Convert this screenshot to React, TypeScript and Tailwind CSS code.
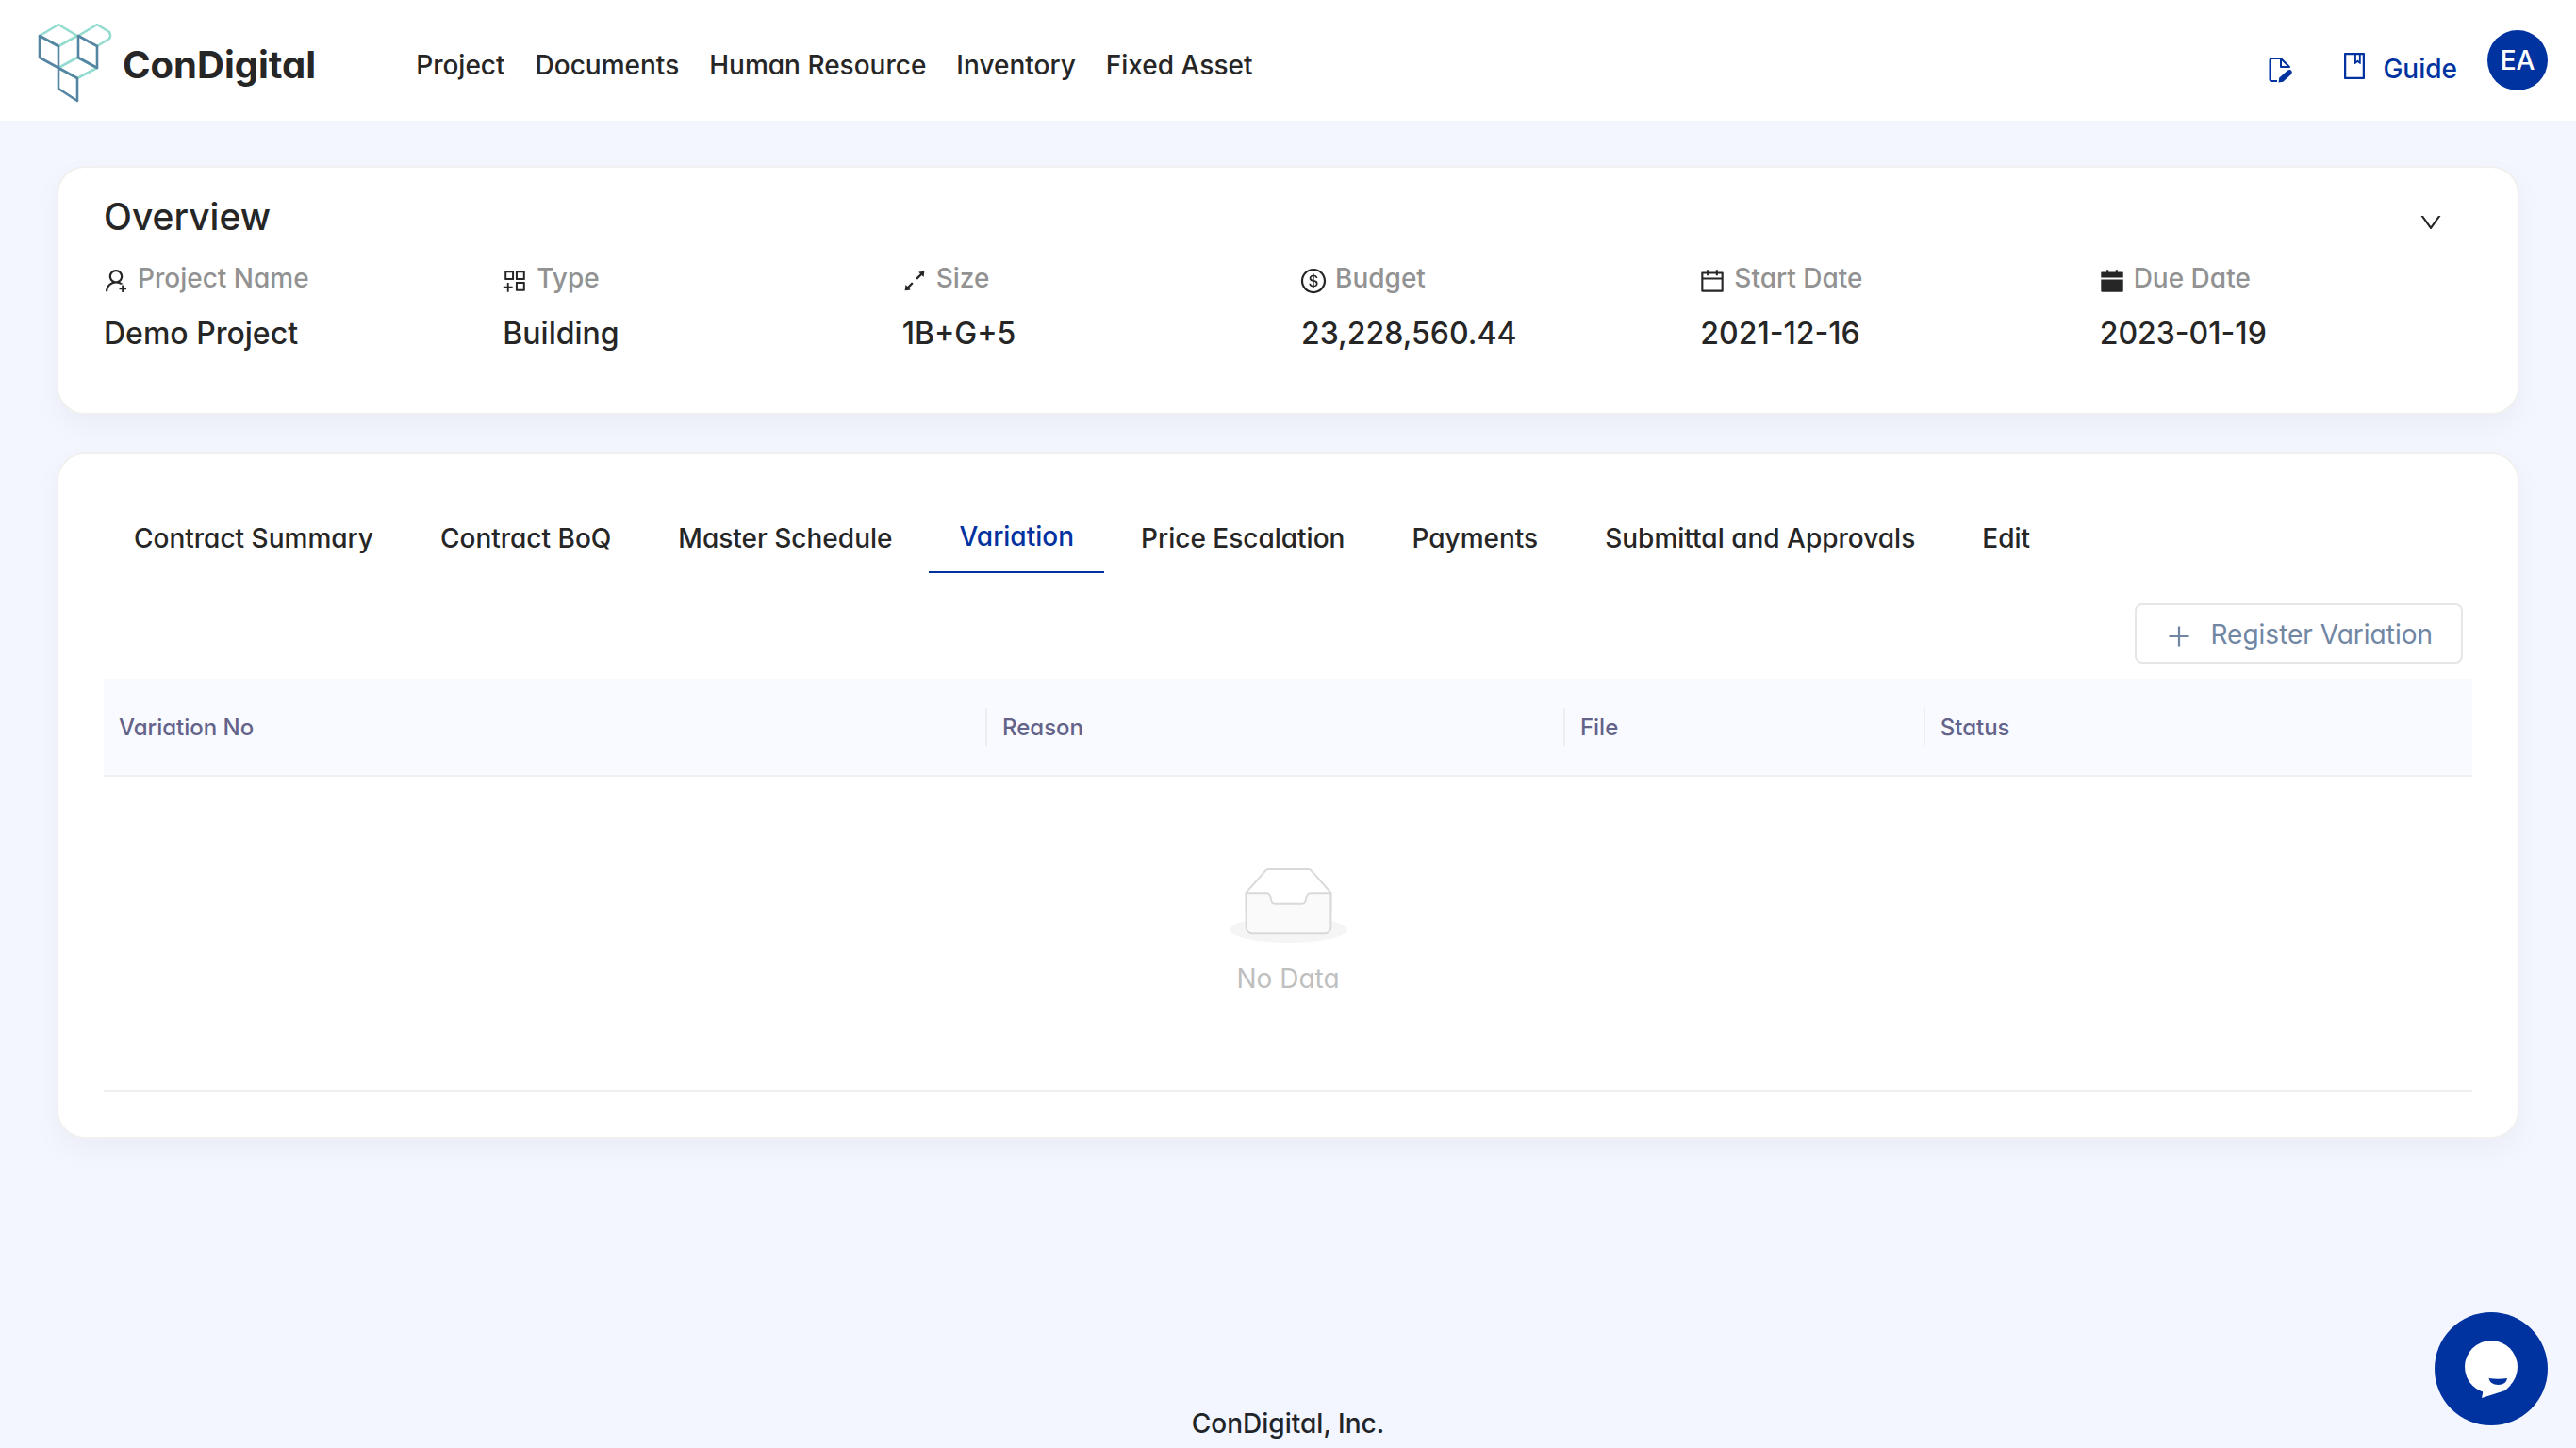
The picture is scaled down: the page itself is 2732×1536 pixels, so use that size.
import React, { useState } from 'react';
import {
  AiFillCalendar,
  AiOutlineAppstoreAdd,
  AiOutlineBook,
  AiOutlineCalendar,
  AiOutlineDollar,
  AiOutlineDown,
  AiOutlineExpandAlt,
  AiOutlinePlus,
  AiOutlineUserAdd,
} from 'react-icons/ai';

const navLinks = ['Project', 'Documents', 'Human Resource', 'Inventory', 'Fixed Asset'];

const overview = [
  { label: 'Project Name', value: 'Demo Project', icon: AiOutlineUserAdd },
  { label: 'Type', value: 'Building', icon: AiOutlineAppstoreAdd },
  { label: 'Size', value: '1B+G+5', icon: AiOutlineExpandAlt },
  { label: 'Budget', value: '23,228,560.44', icon: AiOutlineDollar },
  { label: 'Start Date', value: '2021-12-16', icon: AiOutlineCalendar },
  { label: 'Due Date', value: '2023-01-19', icon: AiFillCalendar },
];

const tabs = [
  'Contract Summary',
  'Contract BoQ',
  'Master Schedule',
  'Variation',
  'Price Escalation',
  'Payments',
  'Submittal and Approvals',
  'Edit',
];

const columns = [
  { title: 'Variation No', width: 'w-[37.3%]' },
  { title: 'Reason', width: 'w-[24.4%]' },
  { title: 'File', width: 'w-[15.2%]' },
  { title: 'Status', width: 'w-[23.1%]' },
];

function Logo() {
  return (
    <svg width="80" height="88" viewBox="40 22 80 88" fill="none" strokeWidth="2.6" strokeLinejoin="round" aria-hidden="true">
      <g stroke="#93dccf">
        <path d="M62 26 42 38l20 11 20-11z" />
        <path d="M83 38l20-12 13 8q2 4 0 7l-13 8" />
        <path d="M82 61 62 72l20 11 21-11z" />
      </g>
      <g stroke="#5585a3">
        <path d="M42 38v23l20 11V49z" />
        <path d="M83 38v23l20 11V49z" />
        <path d="M62 72v22l20 13V83z" />
      </g>
    </svg>
  );
}

function FileEditIcon() {
  return (
    <svg width="28" height="28" viewBox="0 0 28 28" fill="none" aria-hidden="true">
      <path d="M10 26H4.500Q2.500 26 2.500 24V4Q2.500 2 4.500 2H14l9 9H14V2" stroke="currentColor" strokeWidth="2" strokeLinejoin="round" />
      <path d="M11.500 27.500l.8-5 8.700-7.700q2.500-1.800 4.300.200 1.300 2-.5 4l-8.500 7.700z" fill="currentColor" />
    </svg>
  );
}

function EmptyImage() {
  return (
    <svg className="mx-auto" width="125" height="80" viewBox="0 0 64 41" aria-hidden="true">
      <g transform="translate(0 1)" fill="none" fillRule="evenodd">
        <ellipse fill="#f5f5f5" cx="32" cy="33" rx="32" ry="7" />
        <g fillRule="nonzero" stroke="#d9d9d9">
          <path d="M55 12.760L44.854 1.258C44.367.474 43.656 0 42.907 0H21.093c-.749 0-1.460.474-1.947 1.257L9 12.761V22h46v-9.240z" />
          <path
            d="M41.613 15.931c0-1.605.994-2.930 2.227-2.931H55v18.137C55 33.260 53.680 35 52.050 35h-40.100C10.320 35 9 33.259 9 31.137V13h11.160c1.233 0 2.227 1.323 2.227 2.928v.022c0 1.605 1.005 2.901 2.237 2.901h14.752c1.232 0 2.237-1.308 2.237-2.913v-.007z"
            fill="#fafafa"
          />
        </g>
      </g>
    </svg>
  );
}

function Card({ children, className }: { children: React.ReactNode; className: string }) {
  return (
    <section className={`rounded-[30px] border-2 border-[#f0f0f0] bg-white px-12 shadow-[0_12px_32px_rgba(0,0,0,0.04)] ${className}`}>
      {children}
    </section>
  );
}

export default function App() {
  const [active, setActive] = useState('Variation');

  return (
    <div className="flex min-h-screen flex-col bg-[#f3f6ff] font-['Inter','Liberation_Sans',sans-serif] text-[28px] leading-[44px] font-medium text-[#262626] [font-feature-settings:'cv11']">
      {/* Top bar */}
      <header className="flex h-32 items-center bg-white pr-[30px] pl-10">
        <a href="#" className="flex items-center gap-[10px] pt-1">
          <Logo />
          <span className="pt-[6px] text-[40px] font-bold">ConDigital</span>
        </a>
        <nav className="ml-[106px] flex gap-8 pt-[10px]">
          {navLinks.map(link => (
            <a key={link} href="#">{link}</a>
          ))}
        </nav>
        <div className="ml-auto flex items-center text-[#0032a0]">
          <button type="button" aria-label="Edit document" className="mt-5 mr-12">
            <FileEditIcon />
          </button>
          <a href="#" className="mr-8 flex items-center gap-[14px]">
            <AiOutlineBook size={32} className="mt-3" />
            <span className="pt-[18px]">Guide</span>
          </a>
          <button type="button" className="h-16 w-16 rounded-full bg-[#0032a0] text-white">EA</button>
        </div>
      </header>

      <main className="flex flex-col gap-10 px-[60px] pt-12">
        {/* Project overview */}
        <Card className="pt-[22px] pb-[58px]">
          <div className="flex items-center justify-between">
            <h2 className="text-[39px] leading-[60px]">Overview</h2>
            <button type="button" aria-label="Toggle overview" className="mt-3 mr-[30px]">
              <AiOutlineDown size={28} />
            </button>
          </div>
          <dl className="-mr-7 grid grid-cols-6 pt-[13px]">
            {overview.map(({ label, value, icon: Icon }) => (
              <div key={label}>
                <dt className="-ml-[2px] flex items-center gap-2 text-[#929292]">
                  <Icon size={30} className="mt-[6px] text-[#262626]" />
                  {label}
                </dt>
                <dd className="pt-[11px] text-[32px] leading-[52px]">{value}</dd>
              </div>
            ))}
          </dl>
        </Card>

        {/* Contract tabs */}
        <Card className="pt-[54px] pb-12">
          <div role="tablist" className="flex gap-[7px]">
            {tabs.map(tab => (
              <button
                key={tab}
                type="button"
                role="tab"
                aria-selected={tab === active}
                onClick={() => setActive(tab)}
                className={`h-[72px] border-b-2 px-8 ${tab === active ? 'border-[#0032a0] pb-1 text-[#0032a0]' : 'border-transparent'}`}
              >
                {tab}
              </button>
            ))}
          </div>

          <div className="flex justify-end pt-8 pr-[10px] pb-4">
            <button type="button" className="flex h-16 items-center gap-[18px] rounded-lg border-2 border-[#e6e6e6] px-[30px] pt-[2px] font-normal text-[#7086a3]">
              <AiOutlinePlus size={30} className="mt-1" />
              Register Variation
            </button>
          </div>

          <table className="w-full table-fixed">
            <thead>
              <tr className="border-b-2 border-[#f0f0f0] bg-[#f9faff] text-left text-2xl text-[#63638a]">
                {columns.map(({ title, width }, i) => (
                  <th key={title} scope="col" className={`h-[103px] p-0 font-medium ${width}`}>
                    <div className={`px-4 pt-[2px] leading-[38px] ${i < columns.length - 1 ? 'border-r-2 border-[#ededf2]' : ''}`}>{title}</div>
                  </th>
                ))}
              </tr>
            </thead>
            <tbody>
              <tr className="border-b-2 border-[#f0f0f0]">
                <td colSpan={4} className="h-[334px] p-0 text-center font-normal text-[#bfbfbf]">
                  <EmptyImage />
                  <p className="pt-4">No Data</p>
                </td>
              </tr>
            </tbody>
          </table>
        </Card>
      </main>

      <footer className="mt-auto pb-1 text-center text-[#212529]">ConDigital, Inc.</footer>

      <button type="button" aria-label="Open chat" className="fixed right-[30px] bottom-6 h-[120px] w-[120px] rounded-full bg-[#0032a0]">
        <svg viewBox="0 0 120 120" aria-hidden="true">
          <circle cx="60" cy="58" r="28" fill="#fff" />
          <path d="M51 82v4l-1 5 25-8 6-6z" fill="#fff" />
          <path d="M57.500 70q9.500 1.500 19.500 0-1 7-9.500 7t-10-7z" fill="#0032a0" />
        </svg>
      </button>
    </div>
  );
}
